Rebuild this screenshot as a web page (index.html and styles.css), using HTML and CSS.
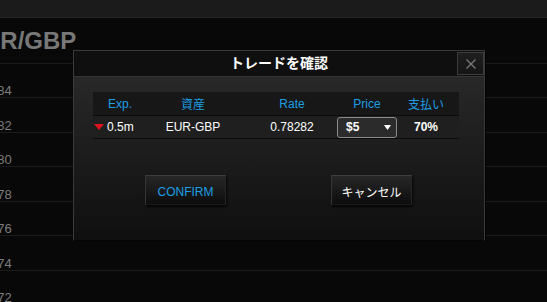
FILE: index.html
```html
<!DOCTYPE html>
<html lang="ja">
<head>
<meta charset="utf-8">
<title>トレードを確認</title>
<link rel="stylesheet" href="styles.css">
</head>
<body>
<div class="topbar"></div>
<div class="chart">
  <div class="chart-title"><span class="pair">EUR/GBP</span></div>
  <div class="grid-row odd"><span class="tick">0.7884</span></div>
  <div class="grid-row even"><span class="tick">0.7882</span></div>
  <div class="grid-row odd"><span class="tick">0.7880</span></div>
  <div class="grid-row even"><span class="tick">0.7878</span></div>
  <div class="grid-row odd"><span class="tick">0.7876</span></div>
  <div class="grid-row even"><span class="tick">0.7874</span></div>
  <div class="grid-row odd"><span class="tick">0.7872</span></div>
</div>

<div class="modal">
  <div class="modal-header">
    <span class="modal-title">トレードを確認</span>
    <button class="close-btn" aria-label="閉じる">
      <svg width="10" height="10" viewBox="0 0 10 10"><path d="M0.5 0.5L9.5 9.5M9.5 0.5L0.5 9.5" stroke="#7a7a7a" stroke-width="1.3" fill="none"/></svg>
    </button>
  </div>
  <div class="modal-body">
    <div class="trade-table">
      <div class="trow thead">
        <div class="cell c1 center">Exp.</div>
        <div class="cell c2">資産</div>
        <div class="cell c3">Rate</div>
        <div class="cell c4">Price</div>
        <div class="cell c5">支払い</div>
      </div>
      <div class="trow tdata">
        <div class="cell c1 left"><svg class="down" width="10" height="6" viewBox="0 0 10 6"><path d="M0 0H10L5 6Z" fill="#dc141c"/></svg>0.5m</div>
        <div class="cell c2">EUR-GBP</div>
        <div class="cell c3">0.78282</div>
        <div class="cell c4">
          <div class="select"><span class="sel-val">$5</span><svg width="7" height="5" viewBox="0 0 7 5"><path d="M0 0H7L3.5 5Z" fill="#fff"/></svg></div>
        </div>
        <div class="cell c5 bold">70%</div>
      </div>
    </div>
    <div class="actions">
      <button class="btn btn-confirm">CONFIRM</button>
      <button class="btn btn-cancel">キャンセル</button>
    </div>
  </div>
</div>
</body>
</html>
```

FILE: styles.css
```css
html, body {
  margin: 0;
  padding: 0;
}
body {
  width: 547px;
  height: 302px;
  overflow: hidden;
  position: relative;
  background: #080808;
  font-family: "Liberation Sans", "Noto Sans CJK JP", sans-serif;
}
.topbar {
  height: 17px;
  background: #1b1b1b;
  border-bottom: 1px solid #242424;
}
.chart {
  overflow: hidden;
}
.chart-title {
  height: 46px;
  box-sizing: border-box;
  padding-top: 9px;
  border-bottom: 1px solid #1b1b1b;
  white-space: nowrap;
}
.pair {
  display: block;
  margin-left: -33px;
  font-size: 24px;
  line-height: 28px;
  font-weight: bold;
  color: #787878;
}
.grid-row {
  display: flex;
  align-items: flex-end;
  border-bottom: 1px solid #1b1b1b;
  white-space: nowrap;
}
.grid-row.odd { height: 33px; }
.grid-row.even { height: 34px; }
.tick {
  margin-left: -28px;
  font-size: 13px;
  line-height: 12px;
  color: #7c7c7c;
}

/* modal */
.modal {
  position: absolute;
  left: 73px;
  top: 50px;
  width: 412px;
  height: 191px;
  box-sizing: border-box;
  border: 1px solid #3a3a3a;
  border-bottom-color: #050505;
  box-shadow: 1px 0 0 #000;
  display: flex;
  flex-direction: column;
}
.modal-header {
  position: relative;
  height: 25px;
  background: #0f0f0f;
  border-bottom: 1px solid #363636;
  display: flex;
  align-items: center;
  justify-content: center;
}
.modal-title {
  color: #fff;
  font-size: 14px;
  font-weight: bold;
  line-height: 25px;
}
.close-btn {
  position: absolute;
  right: 0;
  top: 1px;
  width: 27px;
  height: 23px;
  box-sizing: border-box;
  margin: 0;
  padding: 0;
  border: 1px solid #3d3d3d;
  background: linear-gradient(#1f1f1f, #151515);
  display: flex;
  align-items: center;
  justify-content: center;
}
.modal-body {
  flex: 1;
  background: linear-gradient(#282828, #0f0f0f);
  padding: 15px 24px 0 19px;
}
.trade-table {
  width: 366px;
}
.trow {
  display: grid;
  grid-template-columns: 54px 92px 98px 60px 62px;
  border-bottom: 1px solid #0b0b0b;
  font-size: 12px;
}
.thead {
  height: 23px;
  background: #171717;
  color: #1c9fe4;
}
.tdata {
  height: 22px;
  background: #1f1f1f;
  color: #fff;
}
.cell {
  display: flex;
  align-items: center;
  justify-content: center;
  white-space: nowrap;
}
.cell.left {
  justify-content: flex-start;
  padding-left: 1px;
}
.c3 { padding-left: 8px; }
.c5 { padding-right: 4px; }
.bold { font-weight: bold; }
.down {
  margin-right: 3px;
}
.select {
  width: 60px;
  height: 21px;
  box-sizing: border-box;
  border: 1px solid #8a8a8a;
  border-radius: 3px;
  background: #2b2b2b;
  display: flex;
  align-items: center;
  justify-content: space-between;
  padding: 0 5px 0 8px;
  font-weight: bold;
}
.actions {
  display: flex;
  justify-content: space-between;
  margin-top: 36px;
  padding: 0 48px 0 52px;
}
.btn {
  width: 81px;
  height: 30px;
  box-sizing: border-box;
  margin: 0;
  padding: 3px 0 0;
  border: 1px solid #1a1a1a;
  border-top-color: #3e3e3e;
  border-left-color: #363636;
  border-right-color: #262626;
  background: linear-gradient(#272727, #0d0d0d);
  box-shadow: 1px 2px 2px rgba(0, 0, 0, 0.8);
  font-family: "Liberation Sans", "Noto Sans CJK JP", sans-serif;
  font-size: 12px;
  display: flex;
  align-items: center;
  justify-content: center;
}
.btn-confirm { color: #1c9fe4; }
.btn-cancel { color: #fff; }
```
